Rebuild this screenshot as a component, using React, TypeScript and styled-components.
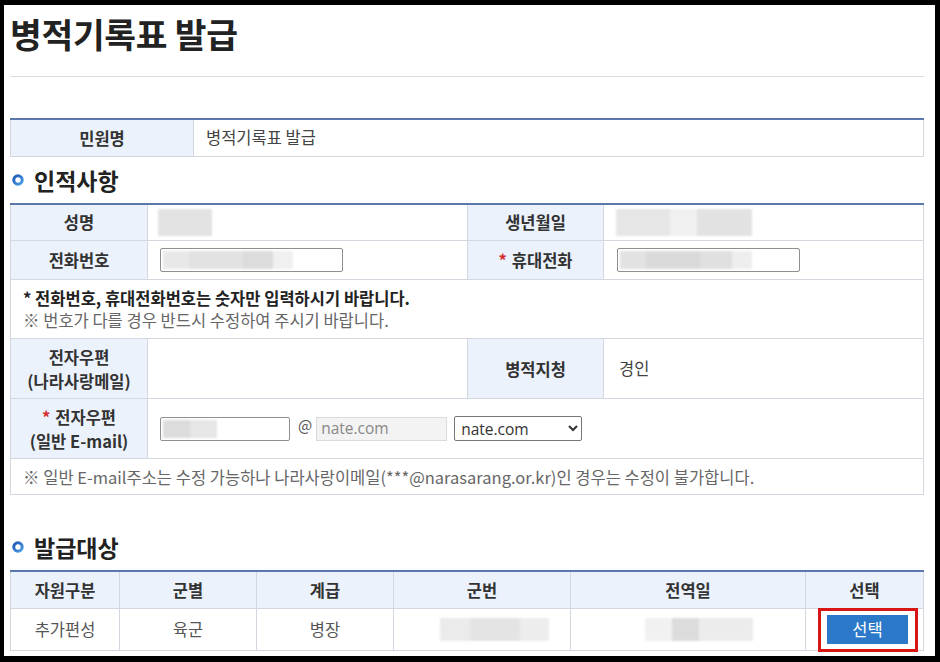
import React from "react";
import styled, { createGlobalStyle } from "styled-components";

const Global = createGlobalStyle`
  html, body { margin: 0; padding: 0; background: #000; }
  body { font-family: "Noto Sans CJK KR", "Noto Sans", sans-serif; color: #444; }
  * { box-sizing: border-box; }
`;

const Frame = styled.div`
  width: 940px;
  height: 662px;
  background: #000;
  padding: 5px 5px 6px 4px;
  overflow: hidden;
`;

const Page = styled.div`
  width: 931px;
  height: 651px;
  background: #fff;
  padding: 8px 11px 0 6px;
  overflow: hidden;
`;

const Title = styled.h1`
  margin: 0;
  font-size: 34.5px;
  line-height: 40px;
  font-weight: 700;
  color: #222;
  letter-spacing: -0.3px;
`;

const Rule = styled.hr`
  margin: 23px 0 0;
  border: 0;
  border-top: 1px solid #dcdcdc;
`;

const SectionHead = styled.h2<{ $top: number }>`
  margin: ${(p) => p.$top}px 0 8px;
  display: flex;
  align-items: center;
  gap: 10px;
  font-size: 23px;
  line-height: 30px;
  font-weight: 700;
  color: #222;
  padding-left: 2px;
`;

const Table = styled.table<{ $top?: number }>`
  width: 914px;
  margin-top: ${(p) => p.$top ?? 0}px;
  border-collapse: collapse;
  table-layout: fixed;
  border-top: 2px solid #5a78ab;
  font-size: 16.5px;
`;

const Col = styled.col<{ $w?: number }>`
  width: ${(p) => (p.$w ? `${p.$w}px` : "auto")};
`;

const Row = styled.tr<{ $h: number }>`
  height: ${(p) => p.$h}px;
`;

const Th = styled.th`
  background: #ebf2fc;
  border: 1px solid #d3d8e0;
  font-weight: 700;
  color: #333;
  text-align: center;
  line-height: 24px;
  padding: 0 4px;
  white-space: nowrap;
`;

const Td = styled.td<{ $center?: boolean; $pl?: number }>`
  border: 1px solid #d3d8e0;
  color: #444;
  text-align: ${(p) => (p.$center ? "center" : "left")};
  padding: 0 10px 0 ${(p) => p.$pl ?? 12}px;
  line-height: 21px;
  white-space: nowrap;
`;

const Req = styled.span`
  color: #d42b2b;
  margin-right: 5px;
`;

const Blur = styled.span<{ $w: number; $h: number; $bg: string; $shift?: number }>`
  display: inline-block;
  vertical-align: middle;
  width: ${(p) => p.$w}px;
  height: ${(p) => p.$h}px;
  margin-left: ${(p) => p.$shift ?? 0}px;
  background: ${(p) => p.$bg};
  filter: blur(1.2px);
`;

const TextBox = styled.span<{ $w: number }>`
  display: inline-flex;
  align-items: center;
  vertical-align: middle;
  width: ${(p) => p.$w}px;
  height: 24px;
  border: 1px solid #8f8f8f;
  border-radius: 2px;
  background: #fff;
  padding: 0 2px;
`;

const Disabled = styled.span`
  display: inline-flex;
  align-items: center;
  vertical-align: middle;
  width: 131px;
  height: 24px;
  border: 1px solid #dadada;
  background: #f3f3f3;
  color: #888;
  padding: 0 4px;
  font-family: "Open Sans", "Noto Sans CJK KR", sans-serif;
  font-size: 15.5px;
`;

const At = styled.span`
  display: inline-block;
  vertical-align: middle;
  margin: 0 4px 0 8px;
  color: #555;
  font-size: 15px;
  position: relative;
  top: -4px;
`;

const Select = styled.select`
  vertical-align: middle;
  margin-left: 7px;
  width: 128px;
  height: 25px;
  border: 1px solid #767676;
  border-radius: 2px;
  background: #fff;
  color: #333;
  font-family: "Open Sans", "Noto Sans CJK KR", sans-serif;
  font-size: 15.5px;
  padding: 0 2px;
`;

const Notice = styled.div<{ $bold?: boolean }>`
  font-weight: ${(p) => (p.$bold ? 700 : 400)};
  color: ${(p) => (p.$bold ? "#222" : "#666")};
  line-height: 22px;
`;

const BlueButton = styled.button`
  position: relative;
  width: 81px;
  height: 29px;
  border: 0;
  background: #2b79c8;
  color: #fff;
  font-family: inherit;
  font-size: 16.5px;
  vertical-align: middle;
  &::after {
    content: "";
    position: absolute;
    left: -9px;
    right: -10px;
    top: -7px;
    bottom: -8px;
    border: 3px solid #d81616;
  }
`;

const DataCell = styled(Td)`
  color: #555;
  padding: 0 4px;
`;

const ButtonCell = styled(DataCell)`
  padding-left: 10px;
`;

const Dot = () => (
  <svg width="12" height="12" viewBox="0 0 12 12">
    <defs>
      <linearGradient id="g" x1="0" y1="0" x2="1" y2="1">
        <stop offset="0" stopColor="#1c55b3" />
        <stop offset="1" stopColor="#4aa0e6" />
      </linearGradient>
    </defs>
    <circle cx="6" cy="6" r="4.2" fill="none" stroke="url(#g)" strokeWidth="3" />
  </svg>
);

export default function App() {
  return (
    <>
      <Global />
      <Frame>
        <Page>
          <Title>병적기록표 발급</Title>
          <Rule />
          <Table $top={41}>
            <colgroup>
              <Col $w={183} />
              <Col />
            </colgroup>
            <tbody>
              <Row $h={37}>
                <Th>민원명</Th>
                <Td>병적기록표 발급</Td>
              </Row>
            </tbody>
          </Table>

          <SectionHead $top={8}>
            <Dot />
            인적사항
          </SectionHead>
          <Table>
            <colgroup>
              <Col $w={137} />
              <Col $w={320} />
              <Col $w={136} />
              <Col />
            </colgroup>
            <tbody>
              <Row $h={37}>
                <Th>성명</Th>
                <Td $pl={10}>
                  <Blur $w={54} $h={27} $bg="#e3e3e3" />
                </Td>
                <Th>생년월일</Th>
                <Td $pl={12}>
                  <Blur $w={136} $h={27} $bg="linear-gradient(90deg,#e6e6e6 0 54px,#f0f0f0 54px 81px,#e2e2e2 81px 136px)" />
                </Td>
              </Row>
              <Row $h={39}>
                <Th>전화번호</Th>
                <Td>
                  <TextBox $w={183}>
                    <Blur $w={130} $h={18} $bg="linear-gradient(90deg,#e8e8e8 0 26px,#e2e2e2 26px 80px,#dcdcdc 80px 110px,#f0f0f0 110px 130px)" />
                  </TextBox>
                </Td>
                <Th>
                  <Req>*</Req>휴대전화
                </Th>
                <Td $pl={13}>
                  <TextBox $w={183}>
                    <Blur $w={132} $h={18} $bg="linear-gradient(90deg,#e2e2e2 0 26px,#dadada 26px 80px,#e0e0e0 80px 112px,#eeeeee 112px 132px)" />
                  </TextBox>
                </Td>
              </Row>
              <Row $h={59}>
                <Td colSpan={4}>
                  <Notice $bold>* 전화번호, 휴대전화번호는 숫자만 입력하시기 바랍니다.</Notice>
                  <Notice>※ 번호가 다를 경우 반드시 수정하여 주시기 바랍니다.</Notice>
                </Td>
              </Row>
              <Row $h={60}>
                <Th>
                  전자우편
                  <br />
                  (나라사랑메일)
                </Th>
                <Td />
                <Th>병적지청</Th>
                <Td $pl={15}>경인</Td>
              </Row>
              <Row $h={60}>
                <Th>
                  <Req>*</Req>전자우편
                  <br />
                  (일반 E-mail)
                </Th>
                <Td colSpan={3}>
                  <TextBox $w={130}>
                    <Blur $w={54} $h={18} $bg="linear-gradient(90deg,#dcdcdc 0 27px,#e6e6e6 27px 54px)" />
                  </TextBox>
                  <At>@</At>
                  <Disabled>nate.com</Disabled>
                  <Select defaultValue="nate.com">
                    <option value="nate.com">nate.com</option>
                  </Select>
                </Td>
              </Row>
              <Row $h={36}>
                <Td colSpan={4}>
                  <Notice>※ 일반 E-mail주소는 수정 가능하나 나라사랑이메일(***@narasarang.or.kr)인 경우는 수정이 불가합니다.</Notice>
                </Td>
              </Row>
            </tbody>
          </Table>

          <SectionHead $top={37}>
            <Dot />
            발급대상
          </SectionHead>
          <Table>
            <colgroup>
              <Col $w={109} />
              <Col $w={137} />
              <Col $w={137} />
              <Col $w={177} />
              <Col $w={235} />
              <Col />
            </colgroup>
            <tbody>
              <Row $h={37}>
                <Th>자원구분</Th>
                <Th>군별</Th>
                <Th>계급</Th>
                <Th>군번</Th>
                <Th>전역일</Th>
                <Th>선택</Th>
              </Row>
              <Row $h={42}>
                <DataCell $center>추가편성</DataCell>
                <DataCell $center>육군</DataCell>
                <DataCell $center>병장</DataCell>
                <DataCell $center>
                  <Blur $w={109} $h={23} $shift={24} $bg="linear-gradient(90deg,#ebebeb 0 30px,#e4e4e4 30px 80px,#ededed 80px 109px)" />
                </DataCell>
                <DataCell $center>
                  <Blur $w={108} $h={23} $shift={22} $bg="linear-gradient(90deg,#f1f1f1 0 27px,#dcdcdc 27px 54px,#ececec 54px 108px)" />
                </DataCell>
                <ButtonCell $center>
                  <BlueButton>선택</BlueButton>
                </ButtonCell>
              </Row>
            </tbody>
          </Table>
        </Page>
      </Frame>
    </>
  );
}
